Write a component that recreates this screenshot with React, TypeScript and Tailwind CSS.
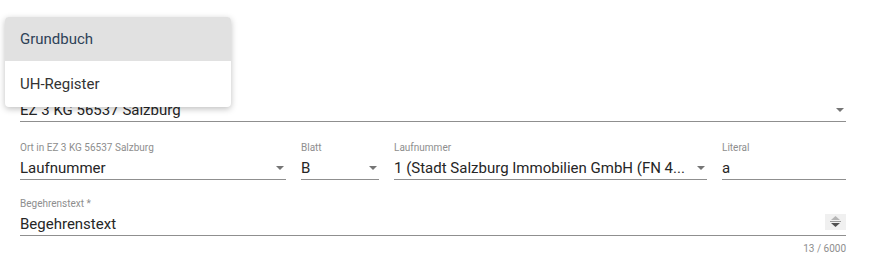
import React from 'react';

const font = { fontFamily: 'Roboto, "Liberation Sans", sans-serif' };

function Arrow() {
  return (
    <svg width="8" height="4" viewBox="0 0 8 4" className="shrink-0 ml-2 mr-[2px]">
      <path d="M0 0 L8 0 L4 4 Z" fill="#757575" />
    </svg>
  );
}

interface FieldProps {
  label?: string;
  value: string;
  select?: boolean;
  className?: string;
}

function Field({ label, value, select, className = '' }: FieldProps) {
  return (
    <div className={`flex flex-col ${className}`}>
      <div className="h-3 text-[10px] leading-3 text-[#8e8e8e] truncate">{label}</div>
      <div className="mt-[2px] h-6 flex items-center border-b border-[#8f8f8f]">
        <span className="flex-1 truncate text-[15px] leading-6 text-[#262626]">{value}</span>
        {select && <Arrow />}
      </div>
    </div>
  );
}

export default function App() {
  return (
    <div className="relative w-[878px] h-[265px] bg-white overflow-hidden" style={font}>
      {/* open menu */}
      <div className="absolute left-[5px] top-[17px] w-[226px] z-10 bg-white rounded shadow-[0_2px_6px_rgba(0,0,0,0.25)] overflow-hidden">
        <div className="h-[44px] flex items-center pl-[15px] bg-[#e1e1e1] text-[15px] text-[#2e4257]">Grundbuch</div>
        <div className="h-[46px] flex items-center pl-[15px] text-[15px] text-[#333]">UH-Register</div>
      </div>

      <div className="flex flex-col pt-[84px] pl-5 pr-8">
        <Field value="EZ 3 KG 56537 Salzburg" select className="mb-[2px]" />

        <div className="flex gap-[15px] mt-[18px]">
          <Field label="Ort in EZ 3 KG 56537 Salzburg" value="Laufnummer" select className="w-[266px]" />
          <Field label="Blatt" value="B" select className="w-[78px]" />
          <Field label="Laufnummer" value="1 (Stadt Salzburg Immobilien GmbH (FN 4..." select className="w-[313px]" />
          <Field label="Literal" value="a" className="w-[124px]" />
        </div>

        <div className="flex flex-col mt-[18px]">
          <div className="h-3 text-[10px] leading-3 text-[#8e8e8e]">Begehrenstext *</div>
          <div className="mt-[2px] h-6 flex items-center border-b border-[#8f8f8f]">
            <span className="flex-1 text-[15px] leading-6 text-[#262626]">Begehrenstext</span>
            <div className="w-[21px] h-4 mb-1 bg-[#f0f0f0] flex flex-col items-center justify-center gap-[1px]">
              <svg width="9" height="4" viewBox="0 0 9 4"><path d="M0 4 L9 4 L4.5 0 Z" fill="#b5b5b5" /></svg>
              <div className="w-[11px] h-px bg-[#9a9a9a]" />
              <svg width="9" height="4" viewBox="0 0 9 4"><path d="M0 0 L9 0 L4.5 4 Z" fill="#505050" /></svg>
            </div>
          </div>
          <div className="mt-[7px] text-right text-[10px] leading-3 text-[#8e8e8e]">13 / 6000</div>
        </div>
      </div>
    </div>
  );
}
